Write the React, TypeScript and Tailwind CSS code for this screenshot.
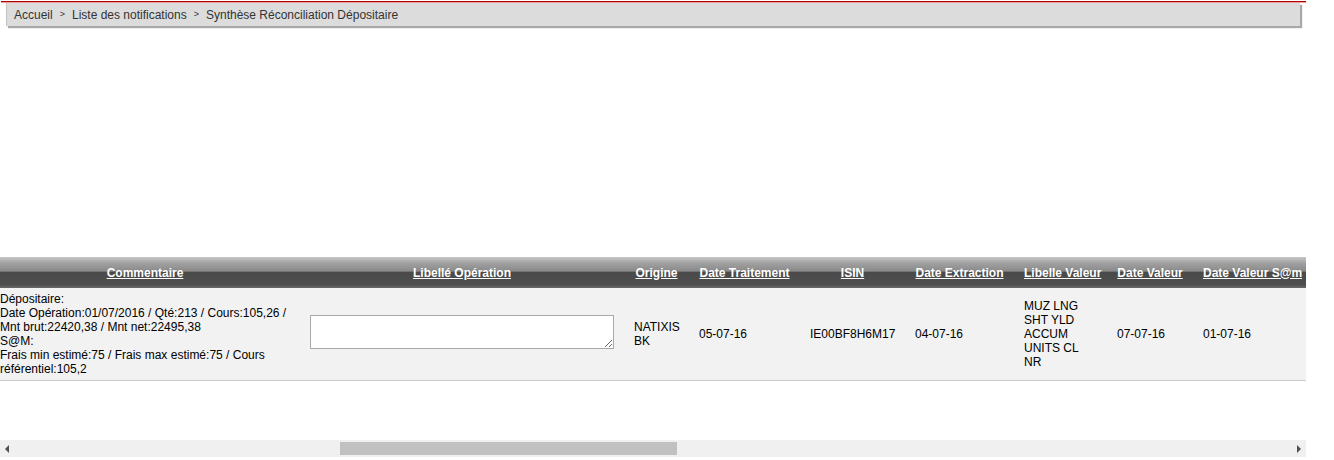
import React from 'react'

const font = { fontFamily: '"Liberation Sans", Arial, sans-serif' }

interface Col {
  label: string
  width: string
}

const columns: Col[] = [
  { label: 'Commentaire', width: 'w-[310px]' },
  { label: 'Libellé Opération', width: 'w-[324px]' },
  { label: 'Origine', width: 'w-[65px]' },
  { label: 'Date Traitement', width: 'w-[111px]' },
  { label: 'ISIN', width: 'w-[105px]' },
  { label: 'Date Extraction', width: 'w-[109px]' },
  { label: 'Libelle Valeur', width: 'w-[93px]' },
  { label: 'Date Valeur', width: 'w-[86px]' },
  { label: 'Date Valeur S@m', width: 'w-[117px]' },
]

const Breadcrumb: React.FC = () => (
  <div className="pt-[1px] pl-[1px] w-[1306px]">
    <div className="h-[2px] bg-[#b30000] border-b border-[#e8a0a0]" />
    <div className="ml-[5px] mr-[6px] h-[23px] bg-[#dcdcdc] border-l border-[#c4c4c4] shadow-[2px_2px_1px_#a8a8a8] flex items-center pl-[7px] text-[12px] text-[#333]">
      <span>Accueil</span>
      <span className="mx-[7px] text-[9px]">&gt;</span>
      <span>Liste des notifications</span>
      <span className="mx-[7px] text-[9px]">&gt;</span>
      <span>Synthèse Réconciliation Dépositaire</span>
    </div>
  </div>
)

const Scrollbar: React.FC = () => (
  <div className="w-[1306px] h-[17px] bg-[#f0f0f0] flex items-center">
    <div className="w-[14px] flex justify-center">
      <div className="w-0 h-0 border-y-[4px] border-y-transparent border-r-[4px] border-r-[#505050]" />
    </div>
    <div className="w-[326px]" />
    <div className="w-[337px] h-[13px] bg-[#c1c1c1]" />
    <div className="flex-1" />
    <div className="w-[14px] flex justify-center">
      <div className="w-0 h-0 border-y-[4px] border-y-transparent border-l-[4px] border-l-[#505050]" />
    </div>
  </div>
)

export default function App() {
  return (
    <div style={font} className="w-[1334px] h-[460px] bg-white text-black">
      <Breadcrumb />
      <div className="h-[231px]" />
      <div className="w-[1306px] overflow-hidden">
        <table className="ml-[-10px] border-collapse table-fixed w-[1320px] text-[12px] leading-[14px]">
          <thead>
            <tr className="h-[31px] bg-[linear-gradient(to_bottom,#c8c8c8_0%,#a0a0a0_20%,#8a8a8a_45%,#4a4a4a_50%,#4e4e4e_90%,#6a6a6a_100%)]">
              {columns.map((c) => (
                <th
                  key={c.label}
                  className={`${c.width} px-[10px] text-center font-bold text-white underline whitespace-nowrap`}
                >
                  {c.label}
                </th>
              ))}
            </tr>
          </thead>
          <tbody>
            <tr className="bg-[#f2f2f2] border-b border-[#cccccc]">
              <td className="px-[10px] py-[4px] align-middle whitespace-nowrap">
                Dépositaire:
                <br />
                Date Opération:01/07/2016 / Qté:213 / Cours:105,26 /
                <br />
                Mnt brut:22420,38 / Mnt net:22495,38
                <br />
                S@M:
                <br />
                Frais min estimé:75 / Frais max estimé:75 / Cours
                <br />
                référentiel:105,2
              </td>
              <td className="px-[10px] py-[4px] align-middle">
                <textarea className="block w-[304px] h-[34px] mb-[5px] bg-white border border-[#a9a9a9] resize" />
              </td>
              <td className="px-[10px] align-middle">
                NATIXIS
                <br />
                BK
              </td>
              <td className="px-[10px] align-middle">05-07-16</td>
              <td className="px-[10px] align-middle">IE00BF8H6M17</td>
              <td className="px-[10px] align-middle">04-07-16</td>
              <td className="px-[10px] align-middle whitespace-nowrap">
                MUZ LNG
                <br />
                SHT YLD
                <br />
                ACCUM
                <br />
                UNITS CL
                <br />
                NR
              </td>
              <td className="px-[10px] align-middle">07-07-16</td>
              <td className="px-[10px] align-middle">01-07-16</td>
            </tr>
          </tbody>
        </table>
      </div>
      <div className="h-[59px]" />
      <Scrollbar />
    </div>
  )
}
